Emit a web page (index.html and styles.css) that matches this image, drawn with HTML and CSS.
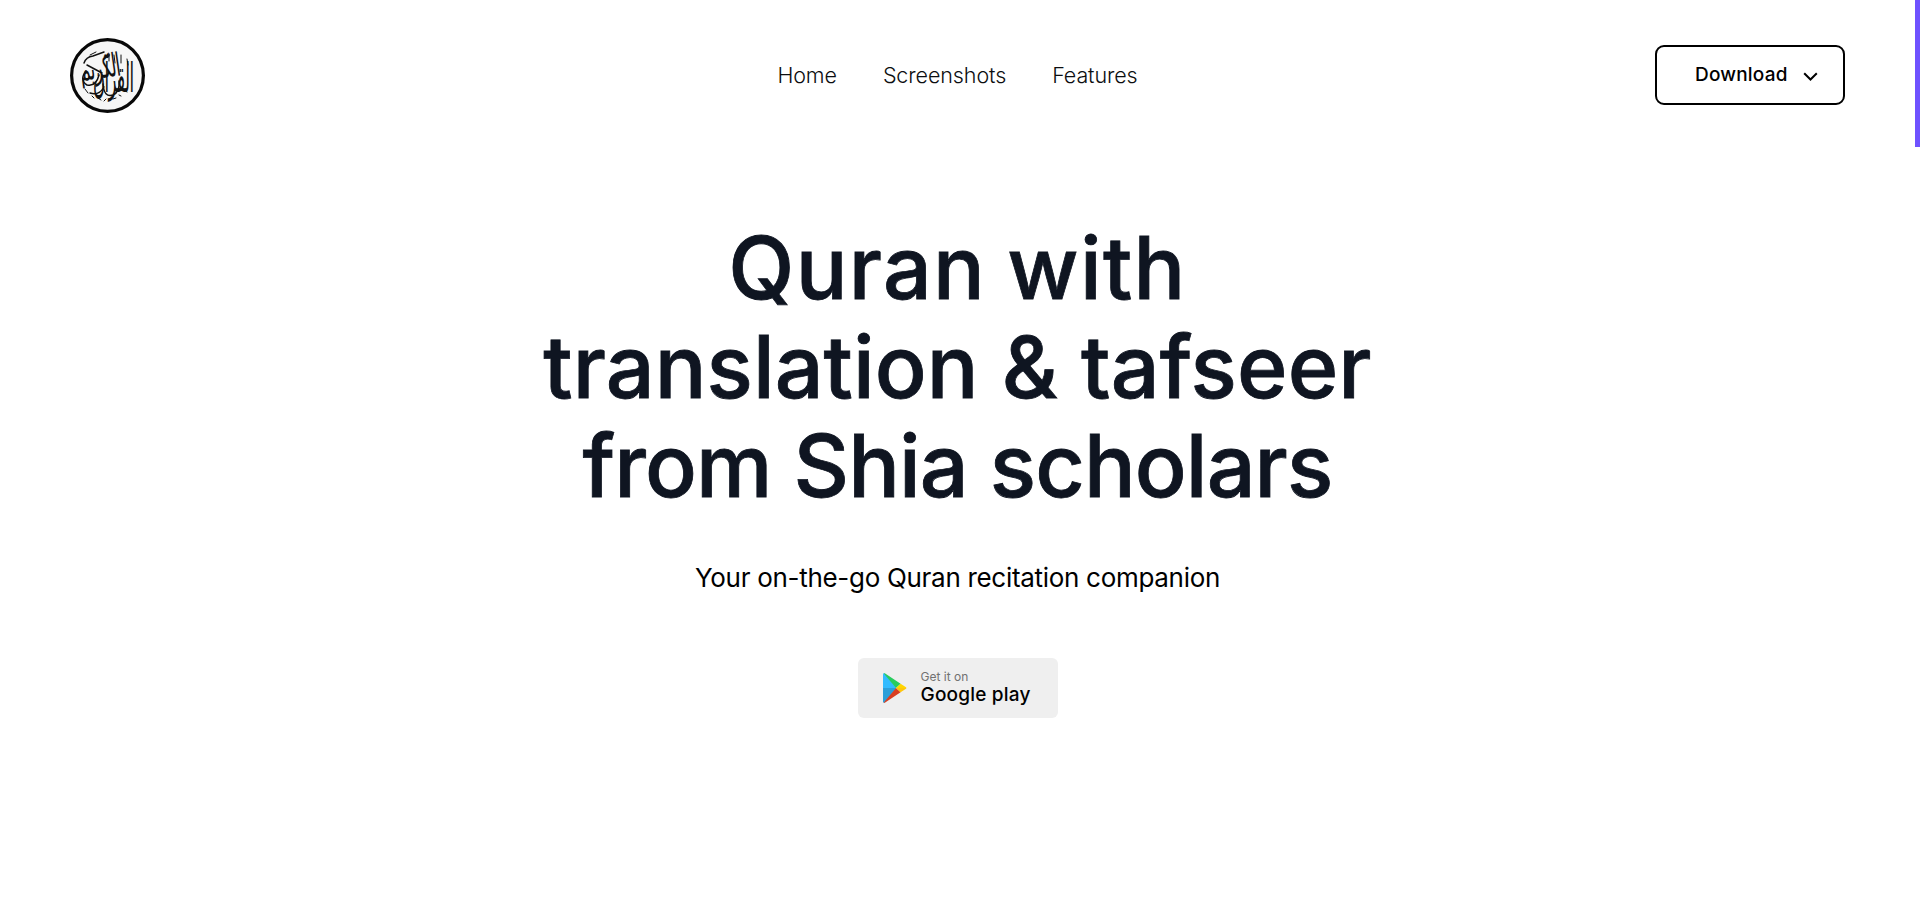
FILE: index.html
```html
<!DOCTYPE html>
<html lang="en">
<head>
<meta charset="utf-8">
<title>Quran with translation &amp; tafseer</title>
<link rel="stylesheet" href="styles.css">
</head>
<body>
<header class="header">
  <a class="logo">
    <svg width="75" height="75" viewBox="0 0 75 75">
      <circle cx="37.5" cy="37.5" r="35.9" fill="#f6f6f6" stroke="#080808" stroke-width="3.2"/>
      <g class="logo-text">
        <text transform="translate(23 54) scale(1 2.5)" font-size="16.5" textLength="41">القرآن</text>
        <text transform="translate(11 43) rotate(-8) scale(1 1.9)" font-size="17" textLength="41">الكريم</text>
      </g>
      <g fill="none" stroke="#111" stroke-linecap="round">
        <path stroke-width="1.5" d="M14 25q2-6 9-7l11-4M17 27l15 8M16 33q-7 9 1 14q9 2 12-10M20 55q9 3 14-6M33 46q1 14 10 11q7-3 6-14"/>
        <path stroke-width="1" d="M20 17l6-3M15 51l3 4M28 60l3 2M34 63l2-2M43 61l3-1M22 58l2 2M57 21l1 6M44 17l1 8M51 17v8M39 16v7M54 52l3 2M49 57l2 1"/>
      </g>
    </svg>
  </a>
  <nav class="nav">
    <a>Home</a>
    <a>Screenshots</a>
    <a>Features</a>
  </nav>
  <button class="download">
    <span>Download</span>
    <svg width="15" height="10" viewBox="0 0 15 10"><path d="M1.2 1.2l6.3 6.3 6.3-6.3" fill="none" stroke="#000" stroke-width="2"/></svg>
  </button>
</header>
<main class="hero">
  <h1 class="title">
    <span class="line line-a">Quran with</span>
    <span class="line line-b">translation &amp; tafseer</span>
    <span class="line line-c">from Shia scholars</span>
  </h1>
  <p class="tagline">Your on-the-go Quran recitation companion</p>
  <a class="store">
    <svg width="24" height="30" viewBox="0 0 24 30">
      <path fill="#32bbff" d="M0 15V1.5Q0 0 1.5.3L13.5 15z"/>
      <path fill="#2c9fd9" d="M0 15v13.5Q0 30 1.5 29.7L13.5 15z"/>
      <path fill="#29cc5e" d="M.6.3Q1.3 0 2.2.6L17.6 10.7 13 15z"/>
      <path fill="#d93f21" d="M.6 29.7Q1.3 30 2.2 29.4L17.6 19.3 13 15z"/>
      <path fill="#ffd500" d="M17.6 10.7L22.6 14q.8.5.8 1H13z"/>
      <path fill="#ffc609" d="M17.6 19.3L22.6 16q.8-.5.8-1H13z"/>
    </svg>
    <span class="store-text"><small>Get it on</small><strong>Google play</strong></span>
  </a>
</main>
<div class="scroll-thumb"></div>
</body>
</html>
```
FILE: styles.css
```css
* { box-sizing: border-box; }
body {
  margin: 0;
  padding-right: 5px;
  min-height: 911px;
  background: #fff;
  color: #000;
  font-family: Inter, "Liberation Sans", sans-serif;
}
.header {
  display: grid;
  grid-template-columns: 1fr auto 1fr;
  align-items: center;
  height: 150px;
  padding: 0 70px;
}
.logo { display: flex; }
.logo-text { font-family: "DejaVu Sans", sans-serif; fill: #111; direction: ltr; }
.nav {
  display: flex;
  gap: 46px;
  font-size: 21.5px;
  font-weight: 300;
  line-height: 30px;
  letter-spacing: -0.1px;
  color: #0c0e10;
}
.download {
  justify-self: end;
  display: flex;
  align-items: center;
  gap: 15px;
  width: 190px;
  height: 60px;
  padding: 0 0 0 38px;
  border: 2px solid #000;
  border-radius: 9px;
  background: #fff;
  color: #000;
  font: 500 19px/28px Inter, sans-serif;
  letter-spacing: 0.2px;
}
.download svg { margin-top: 3px; }
.hero {
  display: flex;
  flex-direction: column;
  align-items: center;
  padding-top: 69px;
}
.title {
  margin: 0;
  font-size: 86px;
  font-weight: 500;
  line-height: 99px;
  color: #0f1521;
  text-align: center;
  -webkit-text-stroke: 0.8px #0f1521;
}
.line { display: block; white-space: nowrap; }
.line-a { letter-spacing: 1.3px; word-spacing: -3px; }
.line-b { letter-spacing: 0.1px; }
.line-c { letter-spacing: -0.9px; }
.tagline {
  margin: 42px 0 0;
  font-size: 26px;
  line-height: 40px;
  letter-spacing: -0.3px;
}
.store {
  display: flex;
  align-items: center;
  gap: 14px;
  width: 200px;
  height: 60px;
  margin-top: 60px;
  padding-left: 25px;
  border-radius: 6px;
  background: #efefef;
}
.store-text { display: flex; flex-direction: column; }
.store-text small {
  font-size: 12px;
  line-height: 14px;
  color: #717171;
}
.store-text strong {
  font-size: 19px;
  font-weight: 500;
  line-height: 22px;
  letter-spacing: 0.2px;
}
.scroll-thumb {
  position: absolute;
  top: 0;
  right: 0;
  width: 5px;
  height: 147px;
  background: #6f52ff;
}
```
